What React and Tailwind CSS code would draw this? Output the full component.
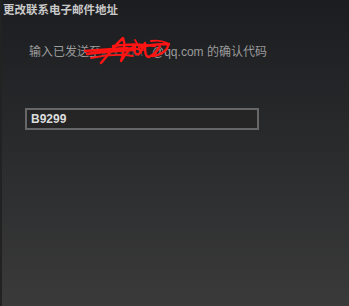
import React, { useState } from 'react';

const Scribble = () => (
  <svg
    className="absolute left-[-18px] top-[-10px] pointer-events-none"
    width="90"
    height="32"
    viewBox="0 0 90 32"
    fill="none"
  >
    <path
      d="M2 16 C16 15 30 14 44 13 M4 19 C18 17 34 16 50 15 M18 28 C26 19 32 10 40 3 C43 10 41 18 38 26 C43 18 47 13 52 11 C51 17 52 20 56 19 C59 16 60 12 62 8 C62 16 62 22 66 22 C70 20 74 16 77 11 C75 16 70 20 66 22 M58 12 C66 10 76 9 86 9 C84 16 78 20 70 21 M30 11 C44 9 58 9 72 11"
      stroke="#ff1414"
      strokeWidth="2.4"
      strokeLinecap="round"
      strokeLinejoin="round"
    />
    <path
      d="M8 23 C22 20 36 19 50 21 M52 5 C55 9 57 14 58 18 M24 17 C36 13 48 12 60 15 M68 6 C74 5 80 6 84 8"
      stroke="#ff1414"
      strokeWidth="1.8"
      strokeLinecap="round"
    />
  </svg>
);

export default function App() {
  const [code, setCode] = useState('B9299');

  return (
    <div
      className="w-[349px] h-[306px] overflow-hidden bg-gradient-to-b from-[#1b1d20] to-[#3a3a3a] border-l-2 border-[#222222] text-[#c4c4c4]"
      style={{ fontFamily: '"Liberation Sans", "Noto Sans CJK SC", sans-serif' }}
    >
      <div className="pl-[1px] pt-[3px] text-[11.5px] leading-[14px] font-bold text-[#c8c8c8]">
        更改联系电子邮件地址
      </div>

      <div className="pl-[27px] pt-[28px] text-[12px] leading-[14px] text-[#9c9c9c]">
        输入已发送至
        <span className="relative inline-block w-[51px] text-[#8a8a8a]">
          <span className="opacity-50">xxxxxxx</span>
          <Scribble />
        </span>
        @qq.com 的确认代码
      </div>

      <div className="pl-[23px] pt-[47px]">
        <input
          type="text"
          value={code}
          onChange={(e) => setCode(e.target.value)}
          className="w-[234px] h-[22px] bg-[#252525] border-2 border-[#676767] px-[4px] text-[12px] font-bold text-[#dcdcdc] outline-none"
        />
      </div>
    </div>
  );
}
